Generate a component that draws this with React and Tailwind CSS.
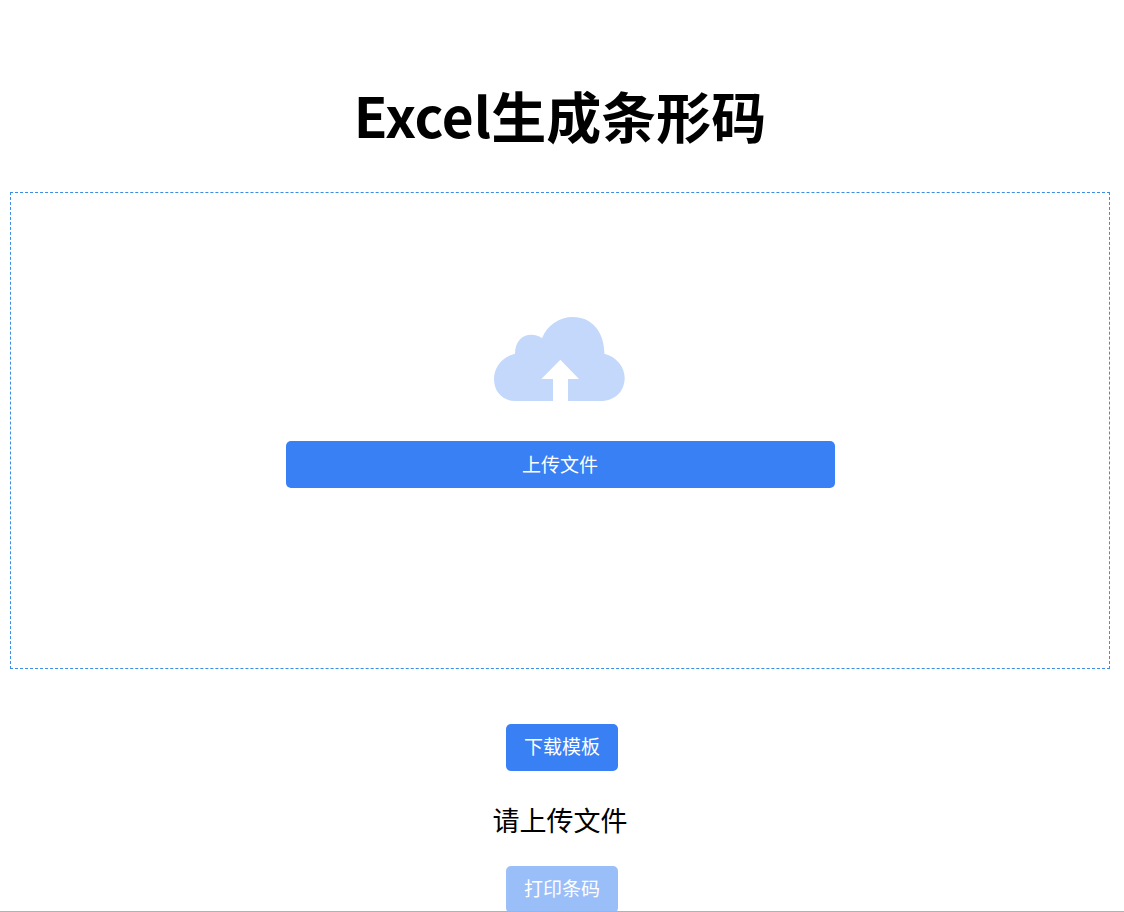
import { useRef, useState } from "react";

const actionButton =
  "h-[47px] shrink-0 rounded-[5px] bg-[#3880f3] px-[18px] text-[19px] leading-[27px] text-white";

function CloudUploadIcon() {
  return (
    <svg
      viewBox="42 51 396 252"
      className="h-[84px] w-[132px] shrink-0 text-[#c3d8fa]"
      fill="currentColor"
      aria-hidden="true"
    >
      <path d="M105 303C69 303 42 276 42 238C42 200 67 171 105 161C105 125 126 104 154 104C167 104 178 108 186 115C202 75 238 51 279 51C335 51 374 96 373 161C410 171 434 200 434 234C434 274 404 303 363 303H264V237H297L241 179L184 237H219V303Z" />
    </svg>
  );
}

export default function App() {
  const fileInput = useRef(null);
  const [file, setFile] = useState(null);

  return (
    <main className="flex h-screen flex-col overflow-hidden border-b border-[#a9b4bc] bg-white pl-[10px] font-['Noto_Sans_CJK_SC',sans-serif] text-black">
      <div className="mr-[14px] flex shrink-0 flex-col">
        <h1 className="pt-[74px] text-center text-[55px] leading-[80px] font-bold">
          Excel生成条形码
        </h1>
        <section className="mt-[38px] flex h-[477px] flex-col items-center border border-dashed border-[#3a8ee6] pt-[124px]">
          <CloudUploadIcon />
          <input
            ref={fileInput}
            type="file"
            accept=".xls,.xlsx"
            aria-label="上传文件"
            className="hidden"
            onChange={(event) => setFile(event.target.files[0])}
          />
          <button
            type="button"
            className={`${actionButton} mt-[40px] w-1/2 pb-[2px]`}
            onClick={() => fileInput.current.click()}
          >
            上传文件
          </button>
        </section>
      </div>
      <div className="mt-[55px] mr-[10px] flex shrink-0 justify-center">
        <button type="button" className={`${actionButton} pb-[5px]`}>
          下载模板
        </button>
      </div>
      <p className="mt-[29px] mr-[14px] shrink-0 text-center text-[27px] leading-[40px]">
        {file ? file.name : "请上传文件"}
      </p>
      <div className="mt-[26px] mr-[10px] flex shrink-0 justify-center">
        <button
          type="button"
          disabled={!file}
          className={`${actionButton} pb-[5px] disabled:opacity-50`}
        >
          打印条码
        </button>
      </div>
    </main>
  );
}
